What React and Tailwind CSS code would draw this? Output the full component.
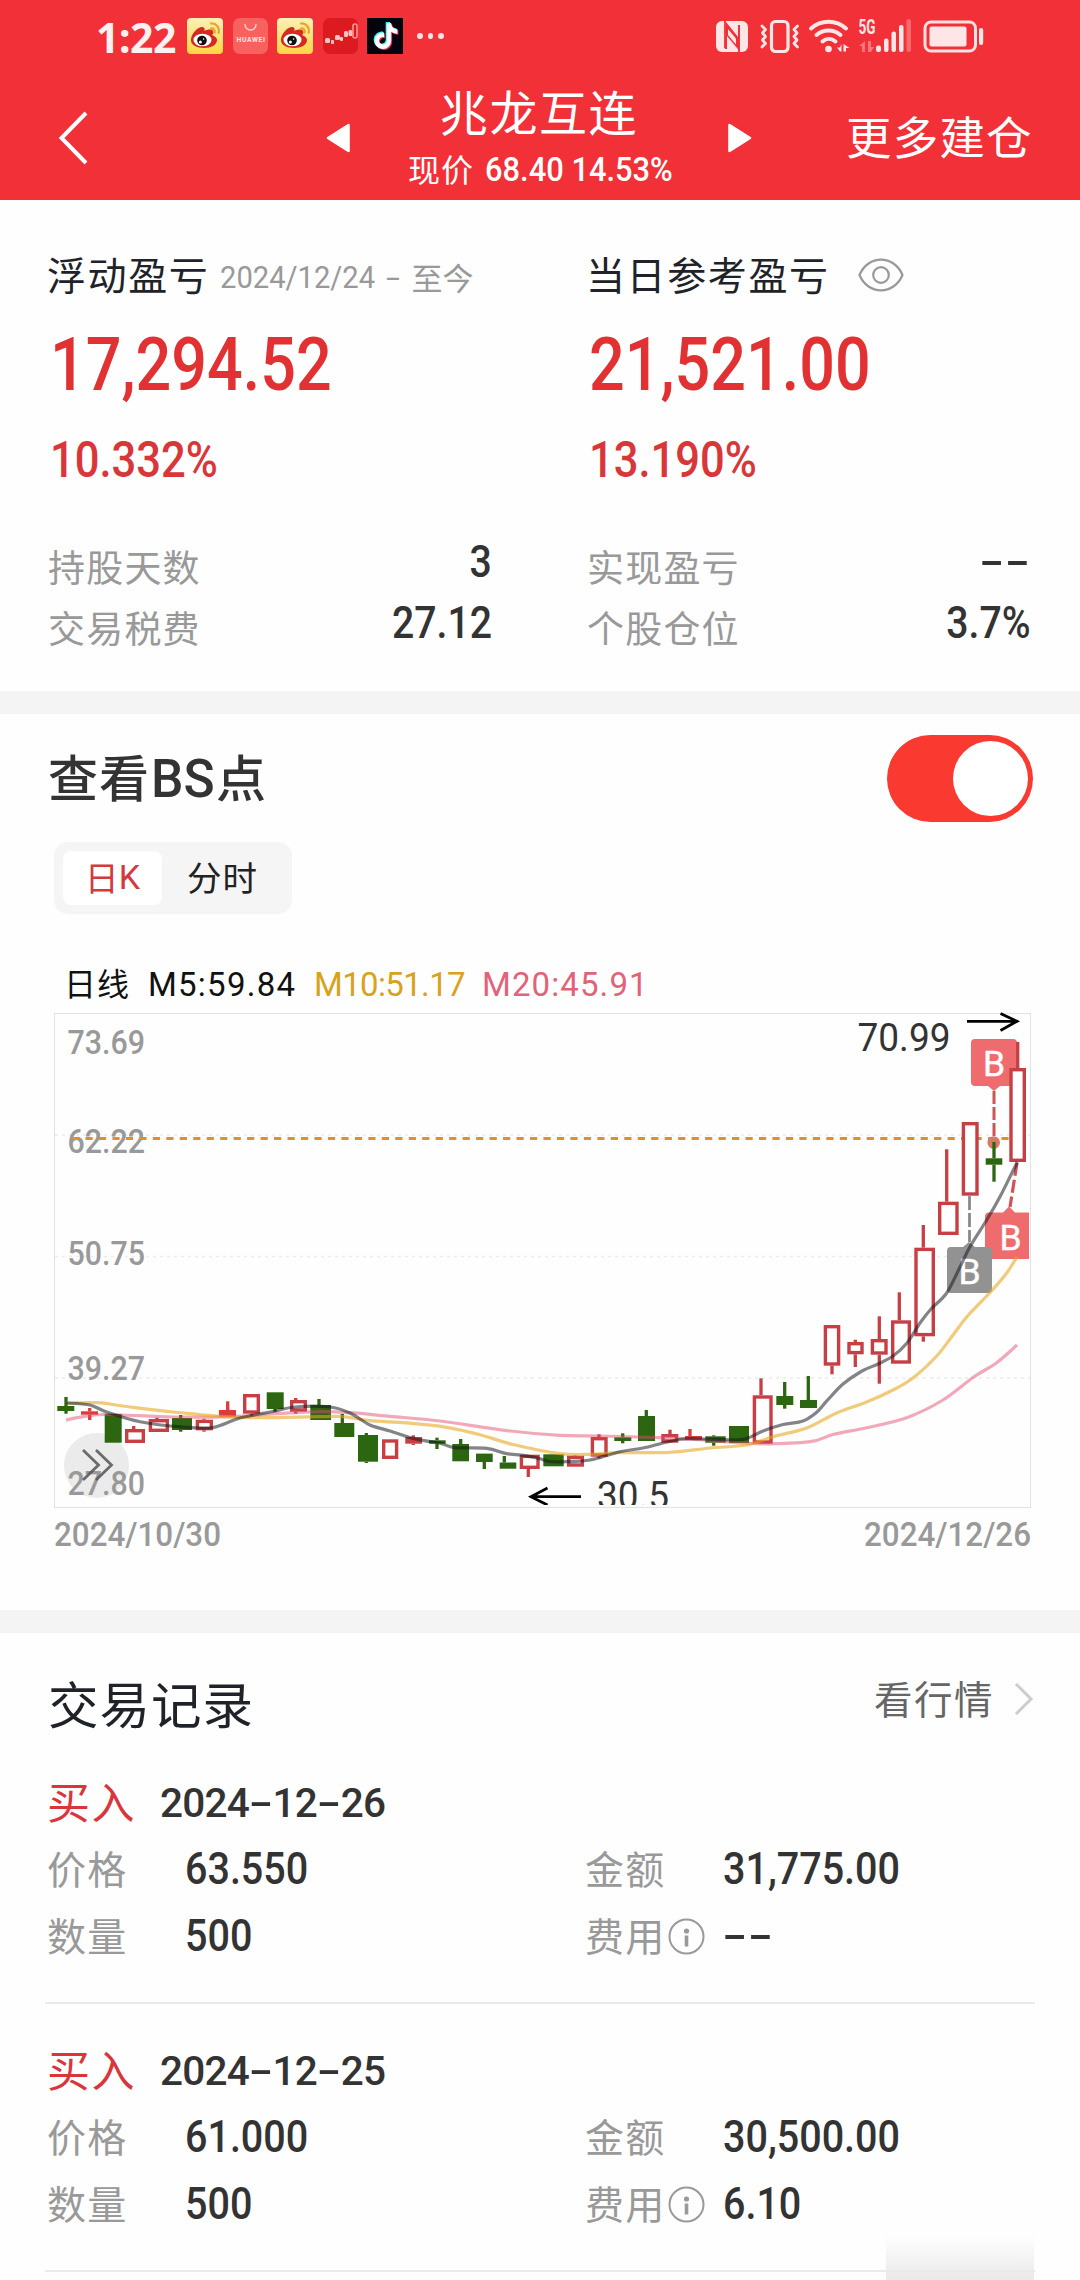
import React from "react";
import { FaTiktok } from "react-icons/fa6";

const CJK = "font-['Noto_Sans_CJK_SC',sans-serif]";
const NUM = "font-['Roboto','Noto_Sans_CJK_SC',sans-serif] font-medium whitespace-nowrap leading-none";

function WeiboIcon() {
  return (
    <svg width="36" height="36" viewBox="0 0 36 36">
      <defs>
        <linearGradient id="wb" x1="0" y1="0" x2="0" y2="1">
          <stop offset="0" stopColor="#fff0b8" />
          <stop offset="1" stopColor="#ffd640" />
        </linearGradient>
      </defs>
      <rect width="36" height="36" rx="4" fill="url(#wb)" />
      <path d="M4 21C5 14 12 8 16 9c2 1 2 3 1 4 4-2 8-2 9 0 1 2 0 3-1 4 3 1 5 3 5 5 0 5-6 8-13 8S3 27 4 21z" fill="#d42a22" />
      <ellipse cx="15.500" cy="22" rx="9" ry="6.300" fill="#fff" />
      <circle cx="15" cy="22.500" r="4.800" fill="#111" />
      <circle cx="13.400" cy="24" r="1.500" fill="#fff" />
      <circle cx="16.600" cy="21" r="0.800" fill="#fff" />
      <path d="M24 5.500c5-.6 9 4 7.600 9.500M24 10.500c2.500-.4 4.200 1.600 3.600 4" fill="none" stroke="#e8a52c" strokeWidth="2.200" strokeLinecap="round" />
    </svg>
  );
}

function HuaweiIcon() {
  return (
    <svg width="35" height="36" viewBox="0 0 35 36">
      <rect width="35" height="36" rx="7" fill="#f7625f" />
      <path d="M12 6.500a5.500 5.500 0 0 0 11 0" fill="none" stroke="#ffd3d0" strokeWidth="1.400" strokeLinecap="round" />
      <text x="3.500" y="24" textLength="28.500" fontSize="6.800" fontWeight="700" fontFamily="Roboto, sans-serif" fill="#ffe4e2">HUAWEI</text>
    </svg>
  );
}

function BullIcon() {
  return (
    <svg width="35" height="36" viewBox="0 0 35 36">
      <rect width="35" height="36" rx="7" fill="#dc1a20" />
      <g fill="#ffc4c1">
        <rect x="2" y="20" width="5" height="5" rx="1.500" />
        <rect x="8" y="22" width="3" height="4" rx="1" />
        <rect x="12" y="17" width="5" height="5" rx="1.500" />
        <rect x="17" y="19" width="3" height="4" rx="1" />
        <rect x="21" y="13" width="4" height="6" rx="1.500" />
        <rect x="25.500" y="12" width="4" height="6" rx="1.500" />
      </g>
      <rect x="30" y="6" width="4" height="14" rx="2" fill="none" stroke="#ff9d9a" strokeWidth="1.500" />
    </svg>
  );
}

function StatusBar() {
  return (
    <div className="flex h-[72px] items-center">
      <div className="ml-[96px] w-[91px] pt-[3px] font-['Noto_Sans',sans-serif] text-[41px] font-bold leading-none tracking-[-0.500px] text-[#fff0f0]">1:22</div>
      <div className="flex items-center gap-[9.500px]">
        <WeiboIcon />
        <HuaweiIcon />
        <WeiboIcon />
        <BullIcon />
        <div className="relative h-9 w-9 bg-[#04040f]">
          <FaTiktok className="absolute left-[5px] top-[4px] h-[26px] w-[26px] text-[#25f4ee]" />
          <FaTiktok className="absolute left-[7px] top-[6px] h-[26px] w-[26px] text-[#fe2c55]" />
          <FaTiktok className="absolute left-[6px] top-[5px] h-[26px] w-[26px] text-white" />
        </div>
      </div>
      <div className="ml-[14px] flex gap-[5px]">
        <i className="h-[5.500px] w-[5.500px] rounded-full bg-[#ffe3e3]" />
        <i className="h-[5.500px] w-[5.500px] rounded-full bg-[#ffe3e3]" />
        <i className="h-[5.500px] w-[5.500px] rounded-full bg-[#ffe3e3]" />
      </div>
      <svg className="ml-auto mr-[94px] shrink-0" width="270" height="40" viewBox="716 16 270 40">
        <g fill="#ffe6e6">
          <rect x="716" y="21" width="32" height="31" rx="6" />
          <path d="M725 21v27M739 52V25" stroke="#f12f36" strokeWidth="1.800" />
          <path d="M726 22l12 15V25h1.500v26L727 36v13h-2z" fill="#f12f36" />
          <path d="M728 29l8 9.500v6l-8-9.500z" fill="#ffe6e6" />
        </g>
        <g fill="none" stroke="#ffe6e6" strokeWidth="3.200" strokeLinecap="round" strokeLinejoin="round">
          <rect x="771.500" y="21.500" width="16.500" height="30" rx="4" />
          <path d="M762 26l3.500 3.500-3 3.500 3 3.500-3 3.500 3 3.500-3.500 3.500M797.500 26l-3.500 3.500 3 3.500-3 3.500 3 3.500-3 3.500 3.500 3.500" strokeWidth="2.800" />
        </g>
        <g fill="none" stroke="#ffe6e6" strokeWidth="4" strokeLinecap="round">
          <path d="M811 28.500c10-9 25-9 35 0M816.500 35c7-6 17-6 24 0M822.500 41.500c4-3.500 9-3.500 13 0" />
        </g>
        <circle cx="828.500" cy="49" r="3.300" fill="#ffe6e6" />
        <path d="M841.500 44v7.500h-1.500l-3-4h3zM843.500 44l6 4h-3.500v3.500h-2.500z" fill="#ffe6e6" />
        <text x="858.500" y="34" textLength="17" lengthAdjust="spacingAndGlyphs" fontSize="19.500" fontWeight="700" fontFamily="Roboto, sans-serif" fill="#ffe6e6">5G</text>
        <path d="M865 41v11h-3v-6h-3zM868 41v11h3l3-5h-3v-6z" fill="#f8797c" />
        <g fill="#ffe6e6">
          <rect x="876" y="45.500" width="5" height="6.500" rx="2" />
          <rect x="884" y="38.500" width="4.500" height="13.500" rx="2" />
          <rect x="891.500" y="31.500" width="4.500" height="20.500" rx="2" />
          <rect x="899" y="25" width="4.500" height="27" rx="2" />
          <rect x="906.500" y="19" width="4.500" height="33" rx="2" fill="#f8686c" />
        </g>
        <rect x="925" y="22" width="50.500" height="29" rx="6" fill="none" stroke="#ffe0e0" strokeWidth="3" />
        <rect x="929.500" y="26.500" width="37" height="20" rx="2" fill="#ffe6e6" />
        <rect x="979" y="28" width="4.200" height="17" rx="2" fill="#ffe6e6" />
      </svg>
    </div>
  );
}

function Header() {
  return (
    <header className="h-[200px] bg-[#f13037] text-white">
      <StatusBar />
      <div className="flex h-[128px] items-center pt-1">
        <div className="w-[326px] shrink-0 pl-[57px]">
          <svg width="32" height="56" viewBox="0 0 32 56"><path d="M29 3L4.500 28 29 53" fill="none" stroke="#fff" strokeWidth="4" /></svg>
        </div>
        <svg className="shrink-0" width="24" height="30" viewBox="0 0 24 30"><path d="M22.500 2v26L2 15z" fill="#fff" stroke="#fff" strokeWidth="2.600" strokeLinejoin="round" /></svg>
        <div className="w-[378px] shrink-0">
          <div className={`${CJK} flex h-[60px] items-center justify-center pt-[8px] text-[48px] leading-none tracking-[1.600px]`}>兆龙互连</div>
          <div className="flex h-[64px] items-center pl-[58px]">
            <span className={`${CJK} w-[77px] text-[32px] leading-none tracking-[1px]`}>现价</span>
            <span className={`${NUM} origin-left scale-x-[0.935] pt-[2px] text-[33px]`}>68.40 14.53%</span>
          </div>
        </div>
        <svg className="shrink-0" width="24" height="30" viewBox="0 0 24 30"><path d="M1.500 2v26L22 15z" fill="#fff" stroke="#fff" strokeWidth="2.600" strokeLinejoin="round" /></svg>
        <div className={`${CJK} ml-[94px] whitespace-nowrap pb-[4px] text-[45.500px] leading-none tracking-[1.200px]`}>更多建仓</div>
      </div>
    </header>
  );
}

function Dashes() {
  return <span className={`${NUM} inline-block scale-x-[1.68] text-[43px] tracking-[0.700px] text-[#333]`}>--</span>;
}

function StatRow({ label, value }) {
  return (
    <div className="flex h-[61px] items-center justify-between">
      <span className={`${CJK} pb-[3px] text-[37px] leading-none tracking-[1.200px] text-[#999]`}>{label}</span>
      {value === "--" ? (
        <span className="mr-[10px] pb-[13px]"><Dashes /></span>
      ) : (
        <span className={`${NUM} origin-right scale-x-[0.9] pb-[9px] text-[43.500px] text-[#333]`}>{value}</span>
      )}
    </div>
  );
}

function Profit({ title, extra, amount, rate, stats, width }) {
  return (
    <div className={width}>
      <div className="flex h-[54px] items-center">
        <span className={`${CJK} -ml-px whitespace-nowrap pb-[4px] text-[39px] leading-none tracking-[1.600px] text-[#1f2329]`}>{title}</span>
        {extra}
      </div>
      <div className={`${NUM} ml-[2px] mt-[27px] flex h-[72px] origin-left scale-x-[0.85] items-center text-[74px] text-[#e23133]`}>{amount}</div>
      <div className={`${NUM} ml-[2px] mt-[34px] flex h-[50px] origin-left scale-x-[0.862] items-center text-[50.500px] text-[#d9363a]`}>{rate}</div>
      <div className="mt-[52px]">
        {stats.map(([l, v]) => <StatRow key={l} label={l} value={v} />)}
      </div>
    </div>
  );
}

function Summary() {
  return (
    <section className="flex h-[491px] gap-[95px] pl-[48px] pt-[48px]">
      <Profit
        width="w-[444px]"
        title="浮动盈亏"
        extra={
          <span className="ml-[11px] flex items-center pt-[5px] text-[#999]">
            <span className="w-[166px]"><span className="inline-block origin-left scale-x-[0.925] whitespace-nowrap font-['Roboto'] text-[31.500px] leading-none">2024/12/24</span></span>
            <span className="inline-block w-[25px] font-['Roboto'] text-[31.500px] leading-none"><span className="inline-block origin-left scale-x-[1.6]">-</span></span>
            <span className={`${CJK} pb-[3px] text-[31px] leading-none`}>至今</span>
          </span>
        }
        amount="17,294.52"
        rate="10.332%"
        stats={[["持股天数", "3"], ["交易税费", "27.12"]]}
      />
      <Profit
        width="w-[444px]"
        title="当日参考盈亏"
        extra={
          <svg className="ml-[27px]" width="48" height="36" viewBox="0 0 48 36" fill="none" stroke="#999" strokeWidth="2.200">
            <path d="M2.500 18C11-2.500 37-2.500 45.500 18 37 38.500 11 38.500 2.500 18z" />
            <circle cx="24" cy="18" r="7.800" />
          </svg>
        }
        amount="21,521.00"
        rate="13.190%"
        stats={[["实现盈亏", "--"], ["个股仓位", "3.7%"]]}
      />
    </section>
  );
}

const R = "#c73f45";
const G = "#2c6611";
// [x1, x2, bodyTop, bodyBottom, wickX, wickTop, wickBottom, kind]
const candles = [
  [57.3, 74.3, 1406, 1411, 66, 1397, 1413.7, "g"],
  [81, 98, 1411.3, 1414.7, 89.7, 1408, 1420, "r"],
  [104.7, 121.7, 1414, 1442.7, 113, 1414, 1442, "g"],
  [125, 145, 1429, 1443, 133.7, 1426, 1443, "h"],
  [148.7, 169, 1419, 1432, 157, 1417.7, 1432, "h"],
  [172, 192, 1418, 1430, 180.7, 1415, 1431.7, "g"],
  [195.7, 213, 1419.7, 1430.3, 204, 1418.7, 1431.7, "h"],
  [219, 236, 1410, 1416.7, 227.7, 1401.3, 1416, "r"],
  [243, 260, 1394, 1413.7, 251.7, 1394, 1415.7, "h"],
  [266.7, 283.7, 1392.3, 1409, 275, 1393, 1411.7, "g"],
  [290, 307, 1400, 1411.7, 295.7, 1398, 1413.7, "h"],
  [310.3, 331, 1405, 1420, 319, 1399, 1420, "g"],
  [334.3, 354.3, 1423, 1437, 342.3, 1414, 1437, "g"],
  [358, 378, 1435, 1461.7, 366.3, 1433, 1463, "g"],
  [382, 398.3, 1439.3, 1459, 390, 1439.3, 1459, "h"],
  [405.3, 422, 1437, 1443.7, 413.3, 1435.3, 1445, "h"],
  [429, 445.7, 1440.3, 1443.7, 437, 1437.7, 1449, "g"],
  [452.3, 469, 1444, 1461.3, 460.7, 1439, 1461, "g"],
  [476, 492.7, 1453.6, 1462, 484.3, 1454, 1469, "g"],
  [499.7, 516.3, 1462.5, 1468.7, 504.3, 1456, 1468, "g"],
  [519.7, 539.7, 1454.7, 1469, 528.3, 1454.7, 1477, "h"],
  [543.3, 563.7, 1454.3, 1466.3, 553, 1455, 1466, "g"],
  [567, 584, 1455.7, 1466.7, 575, 1455, 1466.7, "h"],
  [590.7, 607.7, 1437, 1456.7, 599, 1434.3, 1458.3, "h"],
  [614.3, 631.3, 1437.3, 1441, 622.7, 1433.3, 1443.3, "g"],
  [638, 655, 1416, 1441, 646.3, 1410, 1441, "g"],
  [661.3, 678.3, 1434, 1442.7, 670, 1429.7, 1442, "h"],
  [685, 702, 1436, 1439.7, 690, 1429, 1439, "r"],
  [705.3, 725.7, 1436.3, 1442.7, 713.7, 1435.3, 1445.7, "g"],
  [729, 749, 1426, 1443, 739, 1426, 1443, "g"],
  [752.7, 772.7, 1395.3, 1443.7, 761, 1378.3, 1443, "h"],
  [776.3, 793.3, 1396, 1405, 784.7, 1382, 1408.7, "g"],
  [800, 817, 1400, 1408, 808.3, 1376, 1408, "g"],
  [823.7, 840.3, 1325, 1365.7, 832, 1325, 1374.3, "h"],
  [847.3, 863.7, 1342, 1354.3, 855.3, 1339.7, 1367, "h"],
  [870.7, 887.7, 1339, 1354.7, 879.3, 1316.3, 1383.7, "h"],
  [891, 911, 1320.3, 1363.7, 899.3, 1292.3, 1363, "h"],
  [914.3, 935, 1247.7, 1336.3, 923.3, 1225, 1341.7, "h"],
  [938, 958.7, 1201.7, 1235, 946.7, 1149.3, 1235, "h"],
  [961.7, 978.7, 1122, 1195.7, 970, 1122, 1195, "h"],
  [985.7, 1002.3, 1158.3, 1164.7, 994, 1142, 1181.7, "g"],
  [1009.3, 1026, 1068, 1162, 1017.7, 1042, 1162, "h"],
];

const m5 = [[66, 1403], [89.7, 1405], [106.7, 1412], [140, 1421.7], [183, 1427], [213, 1427.5], [240, 1418], [273, 1411.5], [295, 1407], [330, 1407], [350, 1413], [370, 1425], [390, 1431], [413, 1438.5], [429, 1441.3], [441.7, 1443.6], [455, 1447.6], [486.7, 1448.4], [506.7, 1453.6], [526.7, 1455.8], [540, 1458.7], [550, 1461.5], [566.7, 1461.7], [590, 1460], [620, 1451.7], [643, 1448], [663, 1443], [683, 1439], [703, 1439], [737, 1440], [748, 1438], [763, 1431], [783, 1424.5], [803, 1421], [817, 1412], [827, 1400.7], [843, 1384], [862, 1371], [878, 1364], [893, 1356], [907, 1343], [920, 1323], [931, 1309], [946.7, 1293], [960, 1267], [970, 1246.7], [986.7, 1220], [1000, 1196.7], [1010, 1176.7], [1017.3, 1162]];
const m10 = [[66, 1403], [98, 1402.7], [123, 1406], [173, 1412], [240, 1417.5], [320, 1416.7], [343, 1416.7], [370, 1420.7], [406.7, 1422.9], [446.7, 1427.3], [480, 1434.7], [513, 1444.5], [560, 1453.6], [593, 1454.3], [616.7, 1452.7], [670, 1452.3], [710, 1448], [746.7, 1445], [773, 1436.7], [806.7, 1428], [836.7, 1413], [866.7, 1402], [893, 1390], [913, 1378], [936.7, 1356], [953, 1335], [968, 1315.5], [991, 1291.5], [1006.7, 1273], [1017, 1257]];
const m20 = [[66, 1420], [83, 1416.7], [106.7, 1414.5], [173, 1417], [230, 1416.7], [273, 1414], [320, 1411.7], [350, 1412.7], [390, 1416.3], [440, 1421], [506.7, 1430.6], [560, 1435.4], [599, 1436], [660, 1437.7], [703, 1440], [756.7, 1443.7], [810, 1441.7], [833, 1434.5], [866.7, 1427.7], [906.7, 1417.7], [943, 1400], [973, 1377.5], [996.7, 1362.7], [1017, 1345]];

function smooth(p) {
  let d = `M${p[0][0]} ${p[0][1]}`;
  for (let i = 0; i < p.length - 1; i++) {
    const a = p[i - 1] || p[i], b = p[i], c = p[i + 1], e = p[i + 2] || c;
    d += `C${b[0] + (c[0] - a[0]) / 6} ${b[1] + (c[1] - a[1]) / 6} ${c[0] - (e[0] - b[0]) / 6} ${c[1] - (e[1] - b[1]) / 6} ${c[0]} ${c[1]}`;
  }
  return d;
}

function Candle({ c }) {
  const [x1, x2, t, b, wx, wt, wb, k] = c;
  const col = k === "g" ? G : k === "r" ? "#e0393d" : R;
  return (
    <g>
      {wt < t && <line x1={wx} x2={wx} y1={wt} y2={t} stroke={col} strokeWidth="3.300" />}
      {wb > b && <line x1={wx} x2={wx} y1={b} y2={wb} stroke={col} strokeWidth="3.300" />}
      {k === "h" ? (
        <rect x={x1 + 1.7} y={t + 1.7} width={x2 - x1 - 3.4} height={b - t - 3.4} fill="#fff" stroke={col} strokeWidth="3.400" />
      ) : (
        <rect x={x1} y={t} width={x2 - x1} height={b - t} fill={col} />
      )}
    </g>
  );
}

function ChartLabel({ x, y, w, size = 33, fill = "#999", weight = 400, children }) {
  return <text x={x} y={y} textLength={w} lengthAdjust="spacingAndGlyphs" fontFamily="Roboto, sans-serif" fontSize={size} fontWeight={weight} fill={fill}>{children}</text>;
}

function Chart() {
  return (
    <svg className="block" width="1080" height="500" viewBox="0 1011 1080 500">
      <rect x="54.500" y="1013.500" width="976" height="494" fill="none" stroke="#e2e2e2" strokeWidth="1" />
      {[1135, 1256.5, 1378].map((y) => (
        <line key={y} x1="55" x2="1030" y1={y} y2={y} stroke="#ececec" strokeWidth="1.600" strokeDasharray="3 4" />
      ))}
      <circle cx="96.500" cy="1465.500" r="32.500" fill="#ebebeb" />
      {[["73.69", 1054], ["62.22", 1153], ["50.75", 1265], ["39.27", 1380], ["27.80", 1494.5]].map(([t, y]) => (
        <ChartLabel key={t} x="67.500" y={y} w="77.500" weight="500">{t}</ChartLabel>
      ))}
      <path d="M83 1450l15.500 15-15.500 15M96 1450l15.500 15-15.500 15" fill="none" stroke="#555" strokeOpacity="0.850" strokeWidth="2.800" />
      <line x1="72" x2="1010" y1="1138.500" y2="1138.500" stroke="#e08f2c" strokeWidth="3.200" strokeDasharray="7.200 6.270" />
      <g stroke="none">
        <path d="M975 1039h38a4 4 0 0 1 4 4v39a4 4 0 0 1-4 4h-13l-6 5-6-5h-13a4 4 0 0 1-4-4v-39a4 4 0 0 1 4-4z" fill="#ef6c6e" />
        <path d="M989 1212.500h14l6-6 6 6h14v46.500h-40a4 4 0 0 1-4-4v-38.500a4 4 0 0 1 4-4z" fill="#ef6c6e" />
        <path d="M951 1247h12l6-5 6 5h13a4 4 0 0 1 4 4v38a4 4 0 0 1-4 4h-37a4 4 0 0 1-4-4v-38a4 4 0 0 1 4-4z" fill="#929292" />
      </g>
      <line x1="994" x2="994" y1="1091" y2="1137" stroke="#cf5357" strokeWidth="3" strokeDasharray="13 3" />
      <line x1="1017" x2="1010" y1="1163" y2="1207" stroke="#cf5357" strokeWidth="3.200" strokeDasharray="13 4" />
      <line x1="969.500" x2="969.500" y1="1196" y2="1242" stroke="#8a8a8a" strokeWidth="2.800" strokeDasharray="14 3" />
      <circle cx="993.700" cy="1142.500" r="6.300" fill="#da7a66" />
      {[[994, 1076], [1010.5, 1249.5], [969.5, 1283.5]].map(([x, y]) => (
        <text key={x} x={x} y={y} textAnchor="middle" fontFamily="Roboto, sans-serif" fontSize="35.500" fontWeight="400" fill="#fff" stroke="#fff" strokeWidth="0.400">B</text>
      ))}
      {candles.map((c, i) => <Candle key={i} c={c} />)}
      <g fill="none" strokeWidth="3.200" strokeLinejoin="round">
        <path d={smooth(m20)} stroke="#e44a6e" strokeOpacity="0.470" />
        <path d={smooth(m10)} stroke="#e6a51c" strokeOpacity="0.580" />
        <path d={smooth(m5)} stroke="#101418" strokeOpacity="0.520" />
      </g>
      <ChartLabel x="857.500" y="1050.500" w="93" size={38} fill="#333">70.99</ChartLabel>
      <path d="M967 1021.300h49M1000.500 1013.500l16.500 7.800-16.500 9.200" fill="none" stroke="#000" strokeWidth="2.800" />
      <clipPath id="plot"><rect x="54" y="1013" width="976" height="492" /></clipPath>
      <g clipPath="url(#plot)">
        <ChartLabel x="597" y="1508.500" w="72" size={38} fill="#333">30.5</ChartLabel>
        <path d="M581 1496.700h-50M547.500 1488l-16.500 8.700 16.500 8.300" fill="none" stroke="#000" strokeWidth="2.800" />
      </g>
    </svg>
  );
}

function ChartSection() {
  const ma = "font-['Roboto'] text-[33px] leading-none whitespace-nowrap";
  return (
    <section className="h-[896px]">
      <div className="flex h-[128px] items-center justify-between pl-[48px] pr-[47px]">
        <div className={`${CJK} flex items-baseline text-[50px] font-medium leading-none text-[#333]`}>
          <span className="tracking-[1px]">查看</span>
          <span className="w-[66px]"><span className="inline-block origin-left scale-x-[0.97] pl-[1px] font-['Roboto'] text-[53px] font-medium">BS</span></span>
          <span>点</span>
        </div>
        <div className="flex h-[87px] w-[146px] items-center justify-end rounded-full bg-[#fa3a30] pr-[5.500px]">
          <div className="h-[75px] w-[75px] rounded-full bg-white" />
        </div>
      </div>
      <div className="ml-[54px] flex h-[72px] w-[238px] items-center rounded-[14px] bg-[#f5f5f5] pl-[9px]">
        <div className={`${CJK} flex h-[54px] w-[99px] items-center justify-center rounded-lg bg-white pb-[3px] text-[34px] leading-none text-[#d33a3e]`}>日<span className="font-['Roboto']">K</span></div>
        <div className={`${CJK} ml-[25px] pb-[3px] text-[34.500px] leading-none tracking-[1px] text-[#222]`}>分时</div>
      </div>
      <div className="flex h-[97px] items-center pl-[64px] pt-[43px]">
        <span className={`${CJK} w-[84px] pb-[5px] text-[32px] leading-none tracking-[1px] text-[#111]`}>日线</span>
        <span className={`${ma} w-[166px] tracking-[1.250px] text-[#111]`}>M5:59.84</span>
        <span className={`${ma} w-[168px] tracking-[-0.650px] text-[#d9a21b]`}>M10:51.17</span>
        <span className={`${ma} tracking-[1.100px] text-[#e0637a]`}>M20:45.91</span>
      </div>
      <Chart />
      <svg className="block" width="1080" height="50" viewBox="0 1511 1080 50">
        <ChartLabel x="54" y="1545.500" w="167" weight="500">2024/10/30</ChartLabel>
        <ChartLabel x="864" y="1545.500" w="167" weight="500">2024/12/26</ChartLabel>
      </svg>
    </section>
  );
}

function Dash() {
  return <span className="inline-block w-[23.500px] text-center"><span className="inline-block scale-x-[1.75]">-</span></span>;
}

function Label({ children, className = "" }) {
  return <span className={`${CJK} whitespace-nowrap pb-[5px] text-[39px] leading-none tracking-[1.300px] text-[#999] ${className}`}>{children}</span>;
}

function Value({ children }) {
  if (children === "--") return <span className="ml-[11px] pb-[3px]"><Dashes /></span>;
  return <span className={`${NUM} ml-px origin-left scale-x-[0.908] text-[43.500px] text-[#333]`}>{children}</span>;
}

function Trade({ date, price, amount, qty, fee }) {
  const parts = date.split("-");
  return (
    <div className="mx-[45px] h-[268px] border-b-2 border-[#eaeaea] pl-[2px] pt-[34px]">
      <div className="flex h-[66px] items-center">
        <span className={`${CJK} w-[113px] pb-[5px] text-[43px] leading-none tracking-[1.500px] text-[#d9363c]`}>买入</span>
        <span className={`${NUM} pt-[1px] text-[40.500px] tracking-[-0.750px] text-[#333]`}>{parts[0]}<Dash />{parts[1]}<Dash />{parts[2]}</span>
      </div>
      <div className="flex h-[67px] items-center">
        <div className="flex w-[538px] items-center"><Label className="w-[137px]">价格</Label><Value>{price}</Value></div>
        <Label className="w-[137px]">金额</Label><Value>{amount}</Value>
      </div>
      <div className="flex h-[67px] items-center">
        <div className="flex w-[538px] items-center"><Label className="w-[137px]">数量</Label><Value>{qty}</Value></div>
        <div className="flex w-[137px] items-center">
          <Label className="w-[83px]">费用</Label>
          <svg width="37" height="37" viewBox="0 0 37 37"><circle cx="18.500" cy="18.500" r="17" fill="none" stroke="#999" strokeWidth="2" /><circle cx="18.500" cy="13" r="2.600" fill="#999" /><rect x="16.700" y="17.500" width="3.600" height="11" fill="#999" /></svg>
        </div>
        <Value>{fee}</Value>
      </div>
    </div>
  );
}

export default function App() {
  return (
    <div className="relative h-[2280px] w-[1080px] overflow-hidden bg-[#fefefe]">
      <Header />
      <Summary />
      <div className="h-[23px] bg-[#f4f4f4]" />
      <ChartSection />
      <div className="h-[23px] bg-[#f4f4f4]" />
      <section>
        <div className="flex h-[103px] items-center justify-between pl-[48px] pr-[46px] pt-[35px]">
          <h2 className={`${CJK} text-[50.500px] font-normal leading-none tracking-[1px] text-[#1f2329]`}>交易记录</h2>
          <div className="flex items-center pb-[7px]">
            <span className={`${CJK} mr-[20px] pb-[3px] text-[38.500px] leading-none tracking-[1.500px] text-[#666]`}>看行情</span>
            <svg width="20" height="34" viewBox="0 0 20 34"><path d="M2 2l15 15L2 32" fill="none" stroke="#ccc" strokeWidth="3" /></svg>
          </div>
        </div>
        <Trade date="2024-12-26" price="63.550" amount="31,775.00" qty="500" fee="--" />
        <Trade date="2024-12-25" price="61.000" amount="30,500.00" qty="500" fee="6.10" />
      </section>
      <div className="absolute bottom-0 left-[886px] h-[44px] w-[148px] bg-gradient-to-b from-transparent to-[#e9e9e9]" />
    </div>
  );
}
